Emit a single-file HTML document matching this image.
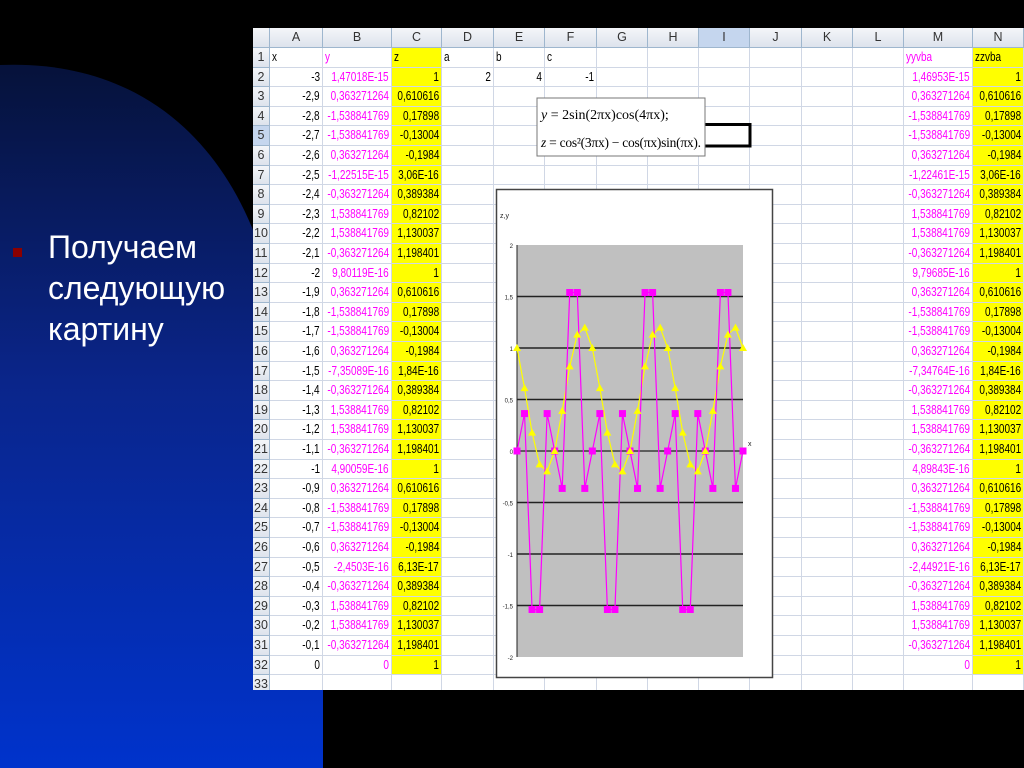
<!DOCTYPE html>
<html><head><meta charset="utf-8">
<style>
html,body{margin:0;padding:0;background:#000;width:1024px;height:768px;overflow:hidden;position:relative;font-family:"Liberation Sans",sans-serif}
#sheet{position:absolute;left:253px;top:28px;width:771px;height:662px;background:#fff;overflow:hidden}
.c{position:absolute;box-sizing:border-box;border-right:1px solid #d0d7e5;border-bottom:1px solid #d0d7e5;font-size:12.5px;line-height:19px;white-space:nowrap;overflow:hidden}
.c span{position:absolute;left:2px;top:0;transform:scaleX(.8);transform-origin:left center}
.r span{left:auto;right:2px;transform-origin:right center}
.h{background:linear-gradient(#f4f6f9,#dde3ec);color:#333;border-color:#9eb6ce}
.h span{left:0;right:0;text-align:center;transform:none}
.p{color:#ff00ff}
.y{background:#ffff00}
.t{position:absolute;color:#fff;font-size:32px;left:48px}
</style></head><body>
<svg width="1024" height="768" style="position:absolute;left:0;top:0">
<defs><linearGradient id="g" x1="0" y1="0" x2="0" y2="1"><stop offset="0" stop-color="#06123a"/><stop offset="0.45" stop-color="#0a258a"/><stop offset="1" stop-color="#0033cc"/></linearGradient></defs>
<path d="M0,65 C120,60 210,120 255,235 C300,350 318,520 323,690 L323,768 L0,768 Z" fill="url(#g)"/>
<rect x="13" y="248" width="9" height="9" fill="#8b0000"/>
</svg>
<div class="t" style="top:229px">Получаем</div>
<div class="t" style="top:270px">следующую</div>
<div class="t" style="top:311px">картину</div>
<div id="sheet"></div>
<script>
var E=[253,270,323,392,442,494,545,597,648,699,750,802,853,904,973,1024];
var L=["","A","B","C","D","E","F","G","H","I","J","K","L","M","N"];
var s=document.getElementById('sheet'),h='';
function cell(x0,x1,y0,hh,cls,txt,st){h+='<div class="c '+cls+'" style="left:'+(x0-253)+'px;top:'+y0+'px;width:'+(x1-x0)+'px;height:'+hh+'px;'+(st||'')+'"><span>'+txt+'</span></div>';}
for(var i=0;i<15;i++)cell(E[i],E[i+1],0,20,'h',L[i],i==9?'background:#c5d6ee':'');
var ys=["1,47018E-15","0,363271264","-1,538841769","-1,538841769","0,363271264","-1,22515E-15","-0,363271264","1,538841769","1,538841769","-0,363271264","9,80119E-16","0,363271264","-1,538841769","-1,538841769","0,363271264","-7,35089E-16","-0,363271264","1,538841769","1,538841769","-0,363271264","4,90059E-16","0,363271264","-1,538841769","-1,538841769","0,363271264","-2,4503E-16","-0,363271264","1,538841769","1,538841769","-0,363271264","0"];
var zb=["1","0,610616","0,17898","-0,13004","-0,1984","","0,389384","0,82102","1,130037","1,198401"];
var ms={0:"1,46953E-15",5:"-1,22461E-15",10:"9,79685E-16",15:"-7,34764E-16",20:"4,89843E-16",25:"-2,44921E-16",30:"0"};
for(var r=1;r<=33;r++){
 var y0=20+(r-1)*19.6,hh=19.6;
 var k=r-2;
 cell(253,270,y0,hh,'h',r,r==5?'background:#c5d6ee':'');
 for(var c=1;c<15;c++){
  var cls='',t='';
  if(r==1){t=["","x","y","z","a","b","c","","","","","","","yyvba","zzvba"][c];if(c==2||c==13)cls='p';if(c==3||c==14)cls='y';}
  else if(r<=32){
   var xv=(-3+k*0.1).toFixed(1).replace('.',',');
   if(k==30)xv='0';if(k==0)xv='-3';if(k==10)xv='-2';if(k==20)xv='-1';
   var zv=k==30?'1':(k%10==5?["3,06E-16","1,84E-16","6,13E-17"][(k-5)/10]:zb[k%10]);
   if(c==1){t=xv;cls='r';}
   if(c==2){t=ys[k];cls='r p';}
   if(c==3||c==14){t=zv;cls='r y';}
   if(c==13){t=(k in ms)?ms[k]:ys[k];cls='r p';}
   if(r==2){if(c==4)t='2',cls='r';if(c==5)t='4',cls='r';if(c==6)t='-1',cls='r';}
  }
  cell(E[c],E[c+1],y0,hh,cls,t);
 }
}
s.innerHTML=h;
var sv='<svg width="1024" height="768" style="position:absolute;left:0;top:0">';
sv+='<path d="M700,124.5 H750 V146 H700" fill="none" stroke="#000" stroke-width="3"/>';
sv+='<rect x="537" y="98" width="168" height="58" fill="#fff" stroke="#777" stroke-width="1"/>';
sv+='<text x="541" y="119" font-family="Liberation Serif" font-size="14" font-style="italic">y <tspan font-style="normal">= 2sin(2πx)cos(4πx);</tspan></text>';
sv+='<text x="541" y="147" font-family="Liberation Serif" font-size="13.5" font-style="italic" textLength="160">z <tspan font-style="normal">= cos²(3πx) − cos(πx)sin(πx).</tspan></text>';
sv+='<rect x="496.5" y="189.5" width="276" height="488" fill="#fff" stroke="#444" stroke-width="1.5"/>';
sv+='<rect x="517" y="245" width="226" height="412" fill="#c0c0c0"/>';
[1.5,1,0.5,-0.5,-1,-1.5].forEach(function(v){var yy=451-v*103;sv+='<line x1="517" x2="743" y1="'+yy+'" y2="'+yy+'" stroke="#222" stroke-width="1.5"/>';});
sv+='<line x1="517" x2="743" y1="451" y2="451" stroke="#222" stroke-width="1.2"/><line x1="517" x2="517" y1="245" y2="657" stroke="#222"/>';
["2","1,5","1","0,5","0","-0,5","-1","-1,5","-2"].forEach(function(l,i){sv+='<text x="513" y="'+(248+i*51.5)+'" font-size="6" text-anchor="end" fill="#222">'+l+'</text>';});
sv+='<text x="500" y="218" font-size="7" fill="#222">z,y</text><text x="748" y="446" font-size="7" fill="#222">x</text>';
var Y=[0,0.3633,-1.5388,-1.5388,0.3633,0,-0.3633,1.5388,1.5388,-0.3633];
var Z=[1,0.6106,0.179,-0.13,-0.1984,0,0.3894,0.821,1.13,1.1984];
var yp=[],zp=[];
for(var i=0;i<=30;i++){var X=517+i*226/30;yp.push([X,451-Y[i%10]*103]);zp.push([X,451-Z[i%10]*103]);}
sv+='<polyline fill="none" stroke="#ffff00" stroke-width="1.2" points="'+zp.join(' ')+'"/>';
sv+='<polyline fill="none" stroke="#ff00ff" stroke-width="1.2" points="'+yp.join(' ')+'"/>';
yp.forEach(function(p){sv+='<rect x="'+(p[0]-3.5)+'" y="'+(p[1]-3.5)+'" width="7" height="7" fill="#ff00ff"/>';});
zp.forEach(function(p){sv+='<polygon points="'+p[0]+','+(p[1]-4)+' '+(p[0]-4)+','+(p[1]+3)+' '+(p[0]+4)+','+(p[1]+3)+'" fill="#ffff00"/>';});
sv+='</svg>';
document.body.insertAdjacentHTML('beforeend',sv);
</script>
</body></html>
